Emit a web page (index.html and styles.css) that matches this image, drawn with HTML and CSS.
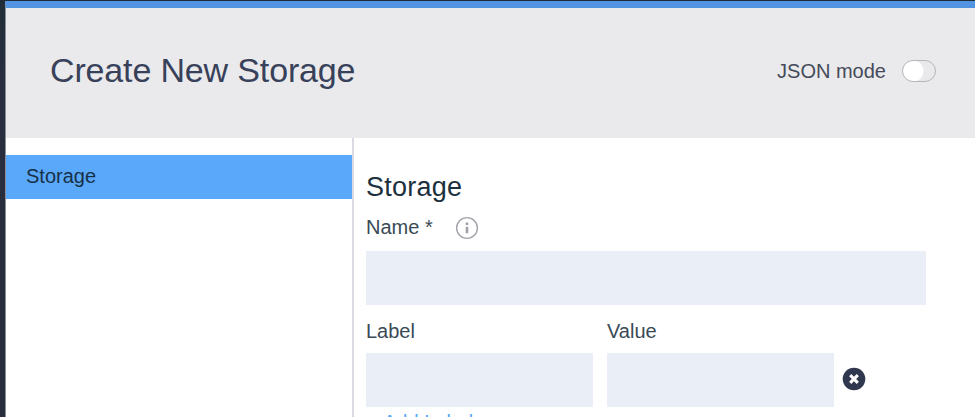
FILE: index.html
```
<!DOCTYPE html>
<html lang="en">
<head>
<meta charset="utf-8">
<title>Create New Storage</title>
<link rel="stylesheet" href="styles.css">
</head>
<body>
<div class="dialog">
  <header class="header">
    <h1 class="title">Create New Storage</h1>
    <div class="mode"><span>JSON mode</span><span class="toggle"></span></div>
  </header>
  <div class="body">
    <nav class="nav"><a class="nav-item">Storage</a></nav>
    <main class="form">
      <h2 class="section">Storage</h2>
      <div class="name-row">
        <label>Name *</label>
        <svg class="info" width="24" height="24" viewBox="0 0 24 24"><circle cx="12" cy="12" r="10.4" fill="none" stroke="#a3a4ab" stroke-width="1.4"/><path d="M12 6.5v2.6M12 10.8v6.4" stroke="#a0a1a9" stroke-width="2.6"/></svg>
      </div>
      <div class="input wide"></div>
      <div class="pair">
        <div class="field"><label>Label</label><div class="input"></div></div>
        <div class="field"><label>Value</label><div class="input"></div></div>
        <svg class="remove" width="24" height="24" viewBox="0 0 24 24"><circle cx="12" cy="12" r="11.3" fill="#30384f"/><path d="M8.2 8.2l7.6 7.6M15.8 8.2l-7.6 7.6" stroke="#fff" stroke-width="3.1"/></svg>
      </div>
      <a class="add">Add Label</a>
    </main>
  </div>
</div>
</body>
</html>
```
FILE: styles.css
```
* { box-sizing: border-box; }
body {
  margin: 0;
  height: 417px;
  overflow: hidden;
  padding: 1px 0 0 5px;
  background: linear-gradient(#202d39, #282e3e 80px);
  font: 20px/24px "Liberation Sans", Arial, sans-serif;
  color: #394a56;
}
.dialog {
  height: 416px;
  overflow: hidden;
  background: #fff;
  border-top: 7px solid #5294e2;
  border-left: 1px solid #8b8e98;
}
.header {
  height: 130px;
  display: flex;
  justify-content: space-between;
  padding: 0 39px 0 44px;
  background: #eaeaec;
}
.title {
  margin: 42px 0 0;
  font-size: 34px;
  line-height: 40px;
  letter-spacing: -0.15px;
  font-weight: 400;
  color: #38415a;
}
.mode {
  display: flex;
  gap: 16px;
  height: 24px;
  margin-top: 51px;
  color: #454a59;
}
.toggle {
  width: 34px;
  height: 22px;
  margin-top: 1px;
  border: 1px solid #b7b7ba;
  border-radius: 11px;
  background: radial-gradient(circle at 10px 10px, #fff 10px, #e9e9eb 11px);
}
.body { display: flex; height: 279px; }
.nav {
  width: 348px;
  padding-top: 17px;
  border-right: 2px solid #d9dae3;
}
.nav-item {
  display: block;
  height: 44px;
  padding: 9px 20px;
  background: #59a8fa;
  color: #183047;
}
.form { flex: 1; padding: 32px 0 0 12px; }
.section {
  margin: 0;
  font-size: 27px;
  line-height: 34px;
  letter-spacing: 0.25px;
  font-weight: 400;
  color: #1c303d;
}
.name-row {
  display: flex;
  gap: 22px;
  height: 47px;
  padding-top: 11px;
}
.info { margin-top: 1px; }
.input { height: 54px; background: #eaeef7; }
.wide { width: 560px; }
.pair { display: flex; gap: 14px; margin-top: 14px; }
.field { width: 227px; }
.field label { display: block; height: 34px; }
.remove { margin: 48px 0 0 -6px; }
.add { display: block; padding: 3px 17px; color: #59a8fa; }
```
